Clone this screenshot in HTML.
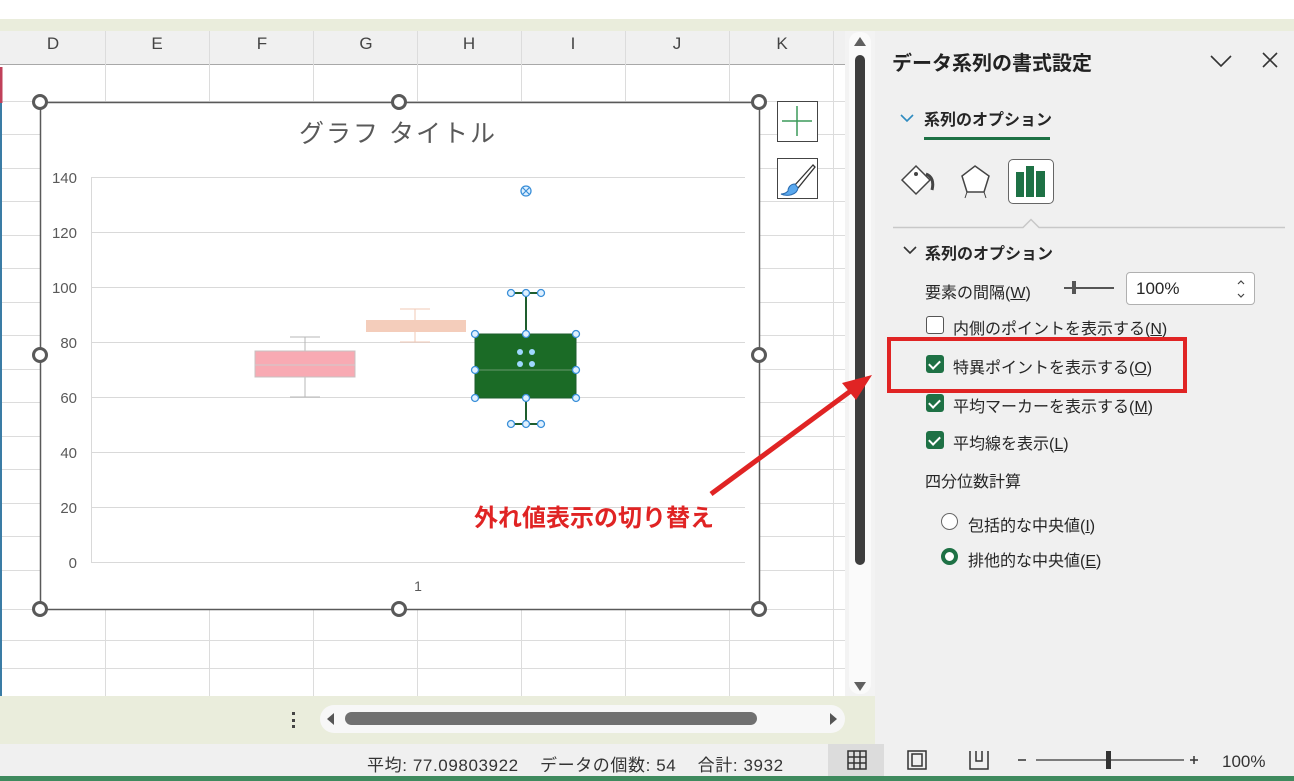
<!DOCTYPE html>
<html><head><meta charset="utf-8"><style>
*{margin:0;padding:0;box-sizing:border-box}
body{width:1294px;height:781px;position:relative;overflow:hidden;background:#fff;font-family:"Liberation Sans","Noto Sans CJK JP",sans-serif;color:#222}
.a{position:absolute}
.p{font-size:16px;color:#262626;white-space:nowrap}
.cb{position:absolute;width:18px;height:18px;border-radius:3px;background:#1e7145}
.cb:after{content:"";position:absolute;left:5px;top:3px;width:5px;height:9px;border:solid #fff;border-width:0 2px 2px 0;transform:rotate(45deg)}
u{text-decoration:underline}
</style></head><body>
<div class="a" style="left:0;top:0;width:1294px;height:19px;background:#fff"></div>
<div class="a" style="left:0;top:19px;width:1294px;height:12px;background:#eaeddc"></div>
<div class="a" style="left:0;top:31px;width:845px;height:34px;background:#f0f0f0;border-bottom:1px solid #a8a8a8"></div>
<svg class="a" style="left:0;top:31px" width="845" height="665">
<g stroke="#dcdcdc" stroke-width="1">
<line x1="105.5" y1="0" x2="105.5" y2="665"/><line x1="209.5" y1="0" x2="209.5" y2="665"/><line x1="313.5" y1="0" x2="313.5" y2="665"/><line x1="417.5" y1="0" x2="417.5" y2="665"/><line x1="521.5" y1="0" x2="521.5" y2="665"/><line x1="625.5" y1="0" x2="625.5" y2="665"/><line x1="729.5" y1="0" x2="729.5" y2="665"/><line x1="833.5" y1="0" x2="833.5" y2="665"/>
<line x1="0" y1="70.5" x2="845" y2="70.5"/><line x1="0" y1="103.5" x2="845" y2="103.5"/><line x1="0" y1="137.5" x2="845" y2="137.5"/><line x1="0" y1="170.5" x2="845" y2="170.5"/><line x1="0" y1="204.5" x2="845" y2="204.5"/><line x1="0" y1="237.5" x2="845" y2="237.5"/><line x1="0" y1="271.5" x2="845" y2="271.5"/><line x1="0" y1="304.5" x2="845" y2="304.5"/><line x1="0" y1="338.5" x2="845" y2="338.5"/><line x1="0" y1="371.5" x2="845" y2="371.5"/><line x1="0" y1="405.5" x2="845" y2="405.5"/><line x1="0" y1="438.5" x2="845" y2="438.5"/><line x1="0" y1="472.5" x2="845" y2="472.5"/><line x1="0" y1="505.5" x2="845" y2="505.5"/><line x1="0" y1="539.5" x2="845" y2="539.5"/><line x1="0" y1="578.5" x2="845" y2="578.5"/><line x1="0" y1="609.5" x2="845" y2="609.5"/><line x1="0" y1="637.5" x2="845" y2="637.5"/>
</g>
<g font-size="17" fill="#444" text-anchor="middle" font-family="Liberation Sans">
<text x="53" y="18">D</text><text x="157" y="18">E</text><text x="262" y="18">F</text><text x="366" y="18">G</text><text x="469" y="18">H</text><text x="573" y="18">I</text><text x="677" y="18">J</text><text x="782" y="18">K</text></g>
<line x1="1" y1="36" x2="1" y2="665" stroke="#3a7ca5" stroke-width="2"/>
<line x1="1" y1="36" x2="1" y2="72" stroke="#c0405a" stroke-width="3"/>
</svg>
<div class="a" style="left:845px;top:31px;width:30px;height:665px;background:#f3f3f3"></div>
<div class="a" style="left:849px;top:32px;width:22px;height:662px;background:#fafafa;border-radius:10px"></div>
<div class="a" style="left:855px;top:55px;width:10px;height:510px;background:#3d3d3d;border-radius:5px"></div>
<div class="a" style="left:854px;top:37px;width:0;height:0;border:6px solid transparent;border-bottom:9px solid #606060;border-top:0"></div>
<div class="a" style="left:854px;top:682px;width:0;height:0;border:6px solid transparent;border-top:9px solid #606060;border-bottom:0"></div>
<div class="a" style="left:0;top:696px;width:875px;height:48px;background:#eaeddc"></div>
<div class="a" style="left:292px;top:712px;width:3px;height:16px;border-left:3px dotted #444"></div>
<div class="a" style="left:320px;top:705px;width:525px;height:28px;background:#f7f7f7;border-radius:14px"></div>
<div class="a" style="left:345px;top:712px;width:412px;height:13px;background:#707070;border-radius:7px"></div>
<div class="a" style="left:327px;top:713px;border:6px solid transparent;border-right:7px solid #555;border-left:0"></div>
<div class="a" style="left:830px;top:713px;border:6px solid transparent;border-left:7px solid #555;border-right:0"></div>
<div class="a" style="left:0;top:744px;width:1294px;height:32px;background:#f0f0f0"></div>
<div class="a" style="left:0;top:776px;width:1294px;height:5px;background:#3f8a5e"></div>
<div class="a" style="left:828px;top:744px;width:56px;height:32px;background:#dcdcdc"></div>
<div class="a p" style="left:367px;top:751px;font-size:17px;color:#333;letter-spacing:0.6px">平均: 77.09803922&nbsp;&nbsp;&nbsp;&nbsp;データの個数: 54&nbsp;&nbsp;&nbsp;&nbsp;合計: 3932</div>
<svg class="a" style="left:840px;top:748px" width="440" height="26">
<g fill="none" stroke="#333" stroke-width="1.5">
<rect x="8" y="3" width="18" height="18"/><line x1="14" y1="3" x2="14" y2="21"/><line x1="20" y1="3" x2="20" y2="21"/><line x1="8" y1="9" x2="26" y2="9"/><line x1="8" y1="15" x2="26" y2="15"/>
<rect x="68" y="3" width="18" height="18"/><rect x="72" y="6" width="10" height="12"/>
<path d="M130 3v18h18V3M136 3v10h6V3"/>
<line x1="178" y1="12" x2="186" y2="12"/><line x1="196" y1="12" x2="344" y2="12" stroke="#555"/><line x1="350" y1="12" x2="358" y2="12"/><line x1="354" y1="8" x2="354" y2="16"/>
</g><rect x="266" y="3" width="5" height="18" fill="#333"/>
<text x="382" y="19" font-size="17" fill="#333" font-family="Liberation Sans">100%</text></svg>
<svg class="a" style="left:0;top:0" width="875" height="700">
<rect x="40.5" y="102.5" width="719" height="507" fill="#fff" stroke="#595959" stroke-width="1.5"/>
<text x="398" y="142" font-size="25" fill="#595959" text-anchor="middle" letter-spacing="2">グラフ タイトル</text>
<g stroke="#d9d9d9" stroke-width="1"><line x1="91" y1="177.5" x2="745" y2="177.5"/><line x1="91" y1="232.5" x2="745" y2="232.5"/><line x1="91" y1="287.5" x2="745" y2="287.5"/><line x1="91" y1="342.5" x2="745" y2="342.5"/><line x1="91" y1="397.5" x2="745" y2="397.5"/><line x1="91" y1="452.5" x2="745" y2="452.5"/><line x1="91" y1="507.5" x2="745" y2="507.5"/><line x1="91" y1="562.5" x2="745" y2="562.5"/><line x1="91.5" y1="177" x2="91.5" y2="562"/></g>
<g font-size="15" fill="#595959" text-anchor="end"><text x="77" y="183">140</text><text x="77" y="238">120</text><text x="77" y="293">100</text><text x="77" y="348">80</text><text x="77" y="403">60</text><text x="77" y="458">40</text><text x="77" y="513">20</text><text x="77" y="568">0</text></g>
<text x="418" y="591" font-size="14" fill="#595959" text-anchor="middle">1</text>
<g stroke="#b7b7b7"><line x1="305" y1="337" x2="305" y2="397"/><line x1="290" y1="337" x2="320" y2="337"/><line x1="290" y1="397" x2="320" y2="397"/></g>
<rect x="255" y="351" width="100" height="26" fill="#f8aab3" stroke="#c9c0c0"/><line x1="255" y1="365" x2="355" y2="365" stroke="#ccc"/>
<g stroke="#f0c8b6"><line x1="415" y1="309" x2="415" y2="342"/><line x1="400" y1="309" x2="430" y2="309"/><line x1="400" y1="342" x2="430" y2="342"/></g>
<rect x="366" y="320" width="100" height="12" fill="#f4cdbb"/>
<g stroke="#1e5e2e" stroke-width="2"><line x1="526" y1="293" x2="526" y2="424"/><line x1="511" y1="293" x2="541" y2="293"/><line x1="511" y1="424" x2="541" y2="424"/></g>
<rect x="475" y="334" width="101" height="64" fill="#1b6b26" stroke="#1e5e2e"/><line x1="475" y1="370" x2="576" y2="370" stroke="#6a9a6f"/>
<g fill="#dff0ff" stroke="#3a8fd8" stroke-width="1.3">
<circle cx="511" cy="293" r="3.5"/><circle cx="526" cy="293" r="3.5"/><circle cx="541" cy="293" r="3.5"/><circle cx="511" cy="424" r="3.5"/><circle cx="526" cy="424" r="3.5"/><circle cx="541" cy="424" r="3.5"/>
<circle cx="475" cy="334" r="3.5"/><circle cx="526" cy="334" r="3.5"/><circle cx="576" cy="334" r="3.5"/><circle cx="475" cy="370" r="3.5"/><circle cx="576" cy="370" r="3.5"/><circle cx="475" cy="398" r="3.5"/><circle cx="526" cy="398" r="3.5"/><circle cx="576" cy="398" r="3.5"/>
<circle cx="526" cy="191" r="5"/></g>
<path d="M523 188l6 6M529 188l-6 6" stroke="#3a8fd8" stroke-width="1.2"/>
<g fill="#9fd8ff"><circle cx="520" cy="352" r="3"/><circle cx="532" cy="352" r="3"/><circle cx="520" cy="364" r="3"/><circle cx="532" cy="364" r="3"/></g>
<g fill="#fff" stroke="#595959" stroke-width="3"><circle cx="40" cy="102" r="6.5"/><circle cx="399" cy="102" r="6.5"/><circle cx="759" cy="102" r="6.5"/><circle cx="40" cy="355" r="6.5"/><circle cx="759" cy="355" r="6.5"/><circle cx="40" cy="609" r="6.5"/><circle cx="399" cy="609" r="6.5"/><circle cx="759" cy="609" r="6.5"/></g>
<rect x="777.5" y="101.5" width="40" height="40" fill="#fff" stroke="#444"/><path d="M797 106v30M782 121h30" stroke="#3c9a5a" stroke-width="1.5"/>
<rect x="777.5" y="158.5" width="40" height="40" fill="#fff" stroke="#444"/>
<path d="M813 165l-18 20 3 3 17-21z" fill="#fff" stroke="#333" stroke-width="1.3"/><path d="M795 184c-5 0-7 4-7 7-2 2-5 3-7 3 6 3 16 1 17-6z" fill="#5aa8ee" stroke="#2a6cb0"/>
<text x="474" y="526" font-size="24" font-weight="bold" fill="#e02424">外れ値表示の切り替え</text>
<line x1="711" y1="494" x2="852" y2="390" stroke="#e02424" stroke-width="5"/><path d="M872 375l-30 8 14 17z" fill="#e02424"/>
</svg>
<div class="a" style="left:875px;top:31px;width:419px;height:713px;background:#f0f0f0"></div>
<div class="a p" style="left:892px;top:47px;font-size:20px;font-weight:bold;color:#222">データ系列の書式設定</div>
<svg class="a" style="left:1205px;top:50px" width="80" height="22"><path d="M6 6l10 10 10-10M58 3l14 14M72 3L58 17" fill="none" stroke="#333" stroke-width="1.6"/></svg>
<svg class="a" style="left:900px;top:113px" width="14" height="10"><path d="M1 2l6 6 6-6" fill="none" stroke="#2e8bc0" stroke-width="1.6"/></svg>
<div class="a p" style="left:924px;top:106px;font-weight:bold">系列のオプション</div>
<div class="a" style="left:924px;top:137px;width:126px;height:3px;background:#1e7145"></div>
<svg class="a" style="left:898px;top:160px" width="60" height="42"><path d="M4 20l14-14 14 14-14 14z" fill="#fff" stroke="#444" stroke-width="1.5"/><path d="M28 14c6 2 8 8 6 16" fill="none" stroke="#444" stroke-width="3"/><circle cx="18" cy="14" r="2" fill="#444"/></svg>
<svg class="a" style="left:958px;top:163px" width="36" height="36"><path d="M17 3l14 10-5 16H9L4 13z" fill="#fff" stroke="#444" stroke-width="1.5"/><path d="M9 29l-2 6M26 29l2 6" stroke="#444"/></svg>
<div class="a" style="left:1008px;top:159px;width:46px;height:45px;border:1px solid #666;border-radius:5px;background:#fff"></div>
<div class="a" style="left:1016px;top:172px;width:8px;height:25px;background:#1e7145"></div>
<div class="a" style="left:1026px;top:166px;width:8px;height:31px;background:#1e7145"></div>
<div class="a" style="left:1036px;top:171px;width:9px;height:26px;background:#1e7145"></div>
<svg class="a" style="left:893px;top:216px" width="392" height="14"><path d="M0 11.5h130l8-8 8 8h246" fill="none" stroke="#c8c8c8" stroke-width="1.5"/></svg>
<svg class="a" style="left:903px;top:245px" width="14" height="10"><path d="M1 2l6 6 6-6" fill="none" stroke="#333" stroke-width="1.6"/></svg>
<div class="a p" style="left:925px;top:240px;font-weight:bold">系列のオプション</div>
<div class="a p" style="left:925px;top:279px">要素の間隔(<u>W</u>)</div>
<div class="a" style="left:1064px;top:287px;width:50px;height:1.5px;background:#555"></div>
<div class="a" style="left:1072px;top:281px;width:4px;height:13px;background:#555"></div>
<div class="a" style="left:1126px;top:272px;width:129px;height:33px;border:1px solid #b0b0b0;border-radius:4px;background:#fff"></div>
<div class="a p" style="left:1136px;top:279px;font-size:17px">100%</div>
<svg class="a" style="left:1235px;top:277px" width="12" height="24"><path d="M3 7l3-3 3 3M3 17l3 3 3-3" fill="none" stroke="#444" stroke-width="1.2"/></svg>
<div class="a" style="left:926px;top:316px;width:18px;height:18px;border:1.5px solid #555;border-radius:3px;background:#fff"></div>
<div class="a p" style="left:953px;top:315px">内側のポイントを表示する(<u>N</u>)</div>
<div class="cb" style="left:926px;top:355px"></div>
<div class="a p" style="left:953px;top:354px">特異ポイントを表示する(<u>O</u>)</div>
<div class="cb" style="left:926px;top:394px"></div>
<div class="a p" style="left:953px;top:393px">平均マーカーを表示する(<u>M</u>)</div>
<div class="cb" style="left:926px;top:431px"></div>
<div class="a p" style="left:953px;top:430px">平均線を表示(<u>L</u>)</div>
<div class="a p" style="left:925px;top:468px">四分位数計算</div>
<div class="a" style="left:941px;top:513px;width:17px;height:17px;border:1.5px solid #666;border-radius:50%;background:#fff"></div>
<div class="a p" style="left:968px;top:512px">包括的な中央値(<u>I</u>)</div>
<div class="a" style="left:941px;top:548px;width:17px;height:17px;border:4.5px solid #1e7145;border-radius:50%;background:#fff"></div>
<div class="a p" style="left:968px;top:547px">排他的な中央値(<u>E</u>)</div>
<div class="a" style="left:887px;top:337px;width:300px;height:56px;border:4px solid #e02424"></div>
</body></html>
